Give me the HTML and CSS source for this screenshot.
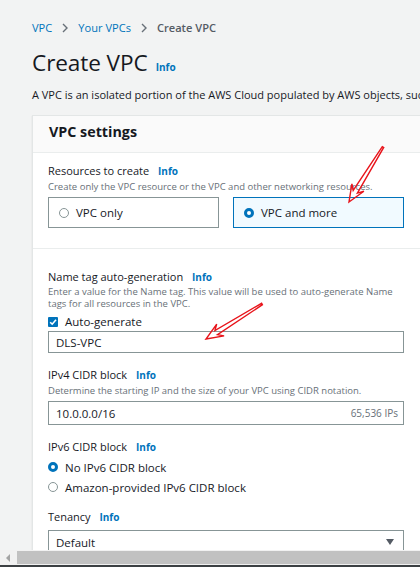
FILE: index.html
```html
<!DOCTYPE html>
<html lang="en">
<head>
<meta charset="utf-8">
<title>Create VPC</title>
<link rel="stylesheet" href="styles.css">
</head>
<body>
<div class="viewport">
  <main class="page">
    <nav class="crumbs">
      <a class="crumb-link">VPC</a>
      <svg class="chev" width="6" height="10" viewBox="0 0 6 10"><path d="M1 1l4 4-4 4" fill="none" stroke="#687078" stroke-width="1.4"/></svg>
      <a class="crumb-link">Your VPCs</a>
      <svg class="chev" width="6" height="10" viewBox="0 0 6 10"><path d="M1 1l4 4-4 4" fill="none" stroke="#687078" stroke-width="1.4"/></svg>
      <span class="crumb-current">Create VPC</span>
    </nav>

    <div class="title-row">
      <h1 class="title">Create VPC</h1>
      <span class="info">Info</span>
    </div>
    <p class="intro">A VPC is an isolated portion of the AWS Cloud populated by AWS objects, such as Amazon EC2 instances.</p>

    <section class="card">
      <header class="card-head"><h2 class="card-title">VPC settings</h2></header>

      <div class="card-sec sec-resources">
        <div class="label">Resources to create <span class="info">Info</span></div>
        <div class="desc">Create only the VPC resource or the VPC and other networking resources.</div>
        <div class="tiles">
          <div class="tile"><span class="radio"></span><span>VPC only</span></div>
          <div class="tile tile-sel"><span class="radio radio-on"></span><span>VPC and more</span></div>
        </div>
      </div>

      <div class="card-sec sec-fields">
        <div class="label">Name tag auto-generation <span class="info">Info</span></div>
        <div class="desc desc-wrap">Enter a value for the Name tag. This value will be used to auto-generate Name tags for all resources in the VPC.</div>
        <div class="check-row">
          <span class="checkbox"><svg width="10" height="10" viewBox="0 0 10 10"><path d="M2.2 5.2l2 2 3.8-4.4" fill="none" stroke="#fff" stroke-width="1.6"/></svg></span>
          <span>Auto-generate</span>
        </div>
        <div class="input input-name">DLS-VPC</div>

        <div class="label label-gap">IPv4 CIDR block <span class="info">Info</span></div>
        <div class="desc">Determine the starting IP and the size of your VPC using CIDR notation.</div>
        <div class="input input-cidr"><span>10.0.0.0/16</span><span class="ips">65,536 IPs</span></div>

        <div class="label label-gap">IPv6 CIDR block <span class="info">Info</span></div>
        <div class="radio-list">
          <div class="radio-row"><span class="radio radio-on"></span><span>No IPv6 CIDR block</span></div>
          <div class="radio-row"><span class="radio"></span><span>Amazon-provided IPv6 CIDR block</span></div>
        </div>

        <div class="label label-gap-sm">Tenancy <span class="info">Info</span></div>
        <div class="input select"><span>Default</span><span class="caret"></span></div>
      </div>
    </section>

    <svg class="annotations" width="420" height="567" viewBox="0 0 420 567">
      <polygon points="349,202 363.9,191.2 357.4,193.1 383.7,147.4 382.3,146.6 353.2,190.5 351.9,183.8" fill="none" stroke="#e8141b" stroke-width="1.4" stroke-linejoin="miter"/>
      <polygon points="206,339 224.1,335.9 217.5,334.7 262.4,304.7 261.6,303.3 214.9,330.5 216.7,324.1" fill="none" stroke="#e8141b" stroke-width="1.4" stroke-linejoin="miter"/>
    </svg>
  </main>

  <div class="hscroll">
    <div class="hs-btn"><svg width="5" height="8" viewBox="0 0 5 8"><path d="M4 0v8L0 4z" fill="#a3a3a3"/></svg></div>
    <div class="hs-thumb"></div>
  </div>
  <div class="bottom-line"></div>
</div>
</body>
</html>
```
FILE: styles.css
```css
* { box-sizing: border-box; }

html, body {
  margin: 0;
  padding: 0;
}

body {
  background: #f2f3f3;
  font-family: "Open Sans", "Noto Sans", sans-serif;
  color: #16191f;
}

.viewport {
  height: 567px;
  display: flex;
  flex-direction: column;
  overflow: hidden;
}

.page {
  flex: 1;
  min-height: 0;
  overflow: hidden;
  position: relative;
  padding-left: 32px;
}

.crumbs {
  display: flex;
  align-items: center;
  gap: 10px;
  margin-top: 20px;
  height: 16px;
  font-size: 11.1px;
  line-height: 16px;
  white-space: nowrap;
}

.crumb-link { color: #0073bb; }

.crumb-current {
  color: #545b64;
  font-weight: 600;
}

.chev { display: block; }

.title-row {
  display: flex;
  align-items: baseline;
  gap: 8px;
  margin-top: 12px;
}

.title {
  margin: 0;
  font-size: 22.6px;
  font-weight: 400;
  line-height: 30px;
  letter-spacing: -0.1px;
}

.info {
  color: #0073bb;
  font-weight: 700;
  font-size: 10px;
}

.intro {
  margin: 9px 0 0;
  font-size: 11px;
  line-height: 16px;
  white-space: nowrap;
}

.card {
  margin-top: 12px;
  width: 440px;
  background: #fff;
  border: 1px solid #e3e6e6;
  border-right: 0;
  box-shadow: 0 1px 1px rgba(0, 28, 36, 0.15);
}

.card-head {
  background: #fafafa;
  border-bottom: 1px solid #eaeded;
  padding: 6px 16px 10px;
}

.card-title {
  margin: 0;
  font-size: 14.3px;
  font-weight: 700;
  line-height: 20px;
}

.card-sec {
  padding: 0 0 0 15px;
}

.sec-resources {
  padding-top: 10px;
  padding-bottom: 20px;
  border-bottom: 1px solid #eaeded;
}

.sec-fields {
  padding-top: 20px;
  padding-bottom: 40px;
}

.label {
  font-size: 11px;
  line-height: 16px;
  white-space: nowrap;
}

.label .info { margin-left: 6px; }

.label-gap { margin-top: 14px; }
.label-gap-sm { margin-top: 12px; }

.desc {
  font-size: 9.5px;
  line-height: 13px;
  color: #687078;
  white-space: nowrap;
  margin-top: 1px;
}

.desc-wrap {
  white-space: normal;
  width: 345px;
  line-height: 12px;
  margin-top: 1px;
}

.tiles {
  display: flex;
  gap: 14px;
  margin-top: 4px;
}

.tile {
  width: 171px;
  height: 31px;
  border: 1px solid #879596;
  display: flex;
  align-items: center;
  gap: 7px;
  padding-left: 10px;
  font-size: 11.5px;
}

.tile-sel {
  border-color: #0073bb;
  background: #f1faff;
}

.radio {
  width: 10px;
  height: 10px;
  border-radius: 50%;
  border: 1px solid #879596;
  background: #fff;
  flex: none;
}

.radio-on {
  border: 3px solid #0073bb;
}

.check-row {
  display: flex;
  align-items: center;
  gap: 7px;
  margin-top: 4px;
  font-size: 11.5px;
  line-height: 16px;
}

.checkbox {
  width: 10px;
  height: 10px;
  background: #0073bb;
  border-radius: 1px;
  display: flex;
  flex: none;
}

.input {
  width: 356px;
  border: 1px solid #879596;
  background: #fff;
  display: flex;
  align-items: center;
  justify-content: space-between;
  padding: 0 5px 0 7px;
  font-size: 11.5px;
}

.input-name {
  height: 22px;
  margin-top: 1px;
}

.input-cidr {
  height: 24px;
  margin-top: 4px;
}

.ips {
  color: #687078;
  font-size: 10px;
}

.radio-list {
  margin-top: 2px;
}

.radio-row {
  display: flex;
  align-items: center;
  gap: 7px;
  height: 20px;
  font-size: 11.5px;
}

.select {
  height: 24px;
  margin-top: 5px;
  padding-right: 9px;
}

.caret {
  width: 0;
  height: 0;
  border-left: 4px solid transparent;
  border-right: 4px solid transparent;
  border-top: 6px solid #545b64;
}

.annotations {
  position: absolute;
  left: 0;
  top: 0;
  pointer-events: none;
}

.hscroll {
  height: 15px;
  flex: none;
  display: flex;
  background: #f1f1f1;
}

.hs-btn {
  width: 17px;
  display: flex;
  align-items: center;
  justify-content: center;
}

.hs-thumb {
  flex: 1;
  background: #c1c1c1;
  margin: 1px 0 1px;
}

.bottom-line {
  height: 2px;
  flex: none;
  background: #3c4043;
}
```
